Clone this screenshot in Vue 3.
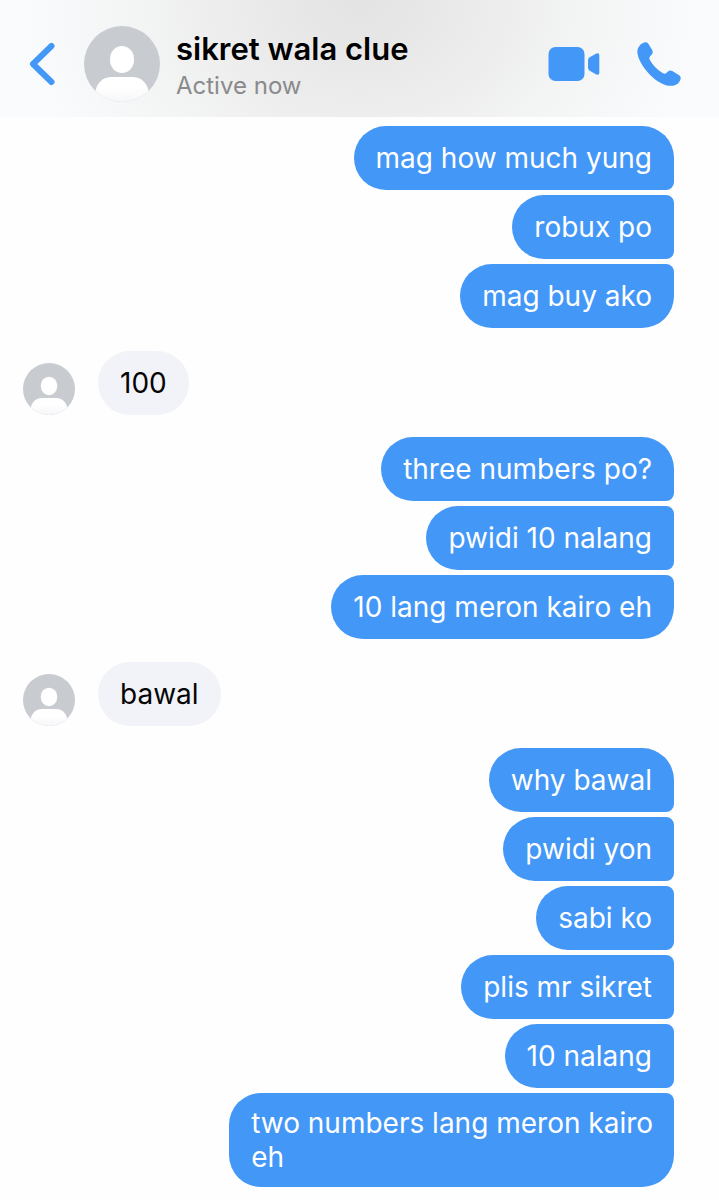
<template>
  <div class="chat">
    <header class="chat-header">
      <button class="icon-button back" type="button" aria-label="Back">
        <svg width="26" height="44" viewBox="0 0 26 44">
          <path d="M22.5 4 L4 22 L22.5 40" />
        </svg>
      </button>
      <svg class="avatar avatar-large" viewBox="0 0 76 76" aria-hidden="true">
        <use href="#person" />
      </svg>
      <div class="contact">
        <h1>sikret wala clue</h1>
        <p>Active now</p>
      </div>
      <button class="icon-button video" type="button" aria-label="Video call">
        <svg width="52" height="36" viewBox="0 0 52 36">
          <rect x="0.5" y="1" width="36" height="34" rx="7" />
          <path d="M40 14.2 Q40 12.5 41.4 11.5 L47.8 7.8 Q51.3 6.2 51.3 9.5 V26.5 Q51.3 29.8 47.8 28.2 L41.4 24.5 Q40 23.5 40 21.8 Z" />
        </svg>
      </button>
      <button class="icon-button call" type="button" aria-label="Voice call">
        <svg width="44" height="44" viewBox="0 0 44 44">
          <path d="M0.4 9 C0.7 5 3.6 1.4 7.4 0.4 C9.2 0 10.6 0.5 11.5 1.9 L15.2 8.1 C16.1 9.9 15.9 11.3 14.7 12.6 L13 14.5 C12.2 15.5 12.2 16.6 12.9 18 C15.6 23 20.3 27.8 26 31.2 C27.3 31.9 28.4 31.8 29.4 30.9 L31.2 29.3 C32.5 28.3 33.8 28.2 35.3 29 L41.8 32.9 C43.5 34 44 35.3 43.6 36.9 C42.5 41 39 43.5 34.5 43.8 C28.5 44.2 20.3 40 13.4 33.2 C5.6 25.4 -0.1 15.5 0.4 9 Z" />
        </svg>
      </button>
    </header>

    <main class="messages">
      <template v-for="(group, index) in groups" :key="index">
        <ul v-if="group.mine" class="group mine">
          <li
            v-for="text in group.messages"
            :key="text"
            class="bubble"
            :class="{ long: text.length > 28 }"
          >{{ text }}</li>
        </ul>
        <div v-else class="group theirs">
          <svg class="avatar avatar-small" viewBox="0 0 76 76" aria-hidden="true">
            <use href="#person" />
          </svg>
          <ul>
            <li v-for="text in group.messages" :key="text" class="bubble">{{ text }}</li>
          </ul>
        </div>
      </template>
    </main>

    <svg class="defs" width="0" height="0" aria-hidden="true">
      <defs>
        <linearGradient id="shoulders" x1="0" y1="0" x2="0" y2="1">
          <stop offset="0.4" stop-color="#ffffff" />
          <stop offset="1" stop-color="#f5f6f8" />
        </linearGradient>
        <clipPath id="avatar-circle">
          <circle cx="38" cy="38" r="38" />
        </clipPath>
        <symbol id="person" viewBox="0 0 76 76">
          <g clip-path="url(#avatar-circle)">
            <rect width="76" height="76" fill="#c8cbd0" />
            <rect x="26" y="20" width="24" height="27" rx="12" ry="13" fill="#ffffff" />
            <path d="M10 76 C10 59 17 51 28 51 H48 C59 51 66 59 66 76 Z" fill="url(#shoulders)" />
          </g>
        </symbol>
      </defs>
    </svg>
  </div>
</template>

<script setup>
  const groups = [
    { mine: true, messages: ['mag how much yung', 'robux po', 'mag buy ako'] },
    { mine: false, messages: ['100'] },
    { mine: true, messages: ['three numbers po?', 'pwidi 10 nalang', '10 lang meron kairo eh'] },
    { mine: false, messages: ['bawal'] },
    {
      mine: true,
      messages: [
        'why bawal',
        'pwidi yon',
        'sabi ko',
        'plis mr sikret',
        '10 nalang',
        'two numbers lang meron kairo eh',
      ],
    },
  ]
</script>

<style>
body {
  margin: 0;
  background: #fefefe;
}
</style>

<style scoped>
.chat {
  font-family: Inter, "Liberation Sans", sans-serif;
  color: #050505;
}

.chat-header {
  display: flex;
  align-items: center;
  box-sizing: border-box;
  height: 117px;
  padding: 11px 38px 0 29px;
  background: radial-gradient(ellipse 50% 240% at 50% 0, #e3e3e3 0%, #ececec 36%, #f4f5f5 66%, #fafbfd 96%);
}

.icon-button {
  display: flex;
  padding: 0;
  border: 0;
  background: none;
  cursor: pointer;
}

.icon-button svg {
  fill: #4397f7;
}

.back svg {
  fill: none;
  stroke: #4397f7;
  stroke-width: 6;
  stroke-linecap: round;
  stroke-linejoin: round;
}

.avatar {
  display: block;
  flex: none;
}

.avatar-large {
  width: 76px;
  height: 76px;
  margin-left: 29px;
}

.avatar-small {
  width: 52px;
  height: 52px;
}

.contact {
  flex: 1;
  margin-left: 16px;
  padding-top: 6px;
}

.contact h1 {
  margin: 0;
  font-size: 31px;
  line-height: 38px;
  font-weight: 600;
  color: #000;
}

.contact p {
  margin: 0;
  font-size: 24px;
  line-height: 36px;
  color: #8a8a8d;
}

.call {
  margin-left: 37px;
}

.messages {
  padding-top: 9px;
  padding-bottom: 13px;
}

ul {
  margin: 0;
  padding: 0;
  list-style: none;
}

.group ul,
.mine {
  display: flex;
  flex-direction: column;
  gap: 5px;
}

.mine {
  align-items: flex-end;
  margin-right: 45px;
}

.theirs {
  display: flex;
  align-items: flex-end;
  gap: 23px;
  margin: 23px 0 22px 23px;
}

.bubble {
  display: flex;
  align-items: center;
  box-sizing: border-box;
  max-width: 66%;
  min-height: 64px;
  padding: 13px 22px;
  border-radius: 32px;
  font-size: 28px;
  line-height: 34px;
}

/* wrapped lines may run closer to the right edge */
.bubble.long {
  padding-right: 13px;
}

.theirs .bubble {
  max-width: none;
  background: #f2f3f8;
}

.mine .bubble {
  border-radius: 32px 8px 8px 32px;
  background: #4397f7;
  color: #fff;
}

.mine .bubble:first-child {
  border-top-right-radius: 32px;
}

.mine .bubble:last-child {
  border-bottom-right-radius: 32px;
}

.defs {
  position: absolute;
}
</style>
